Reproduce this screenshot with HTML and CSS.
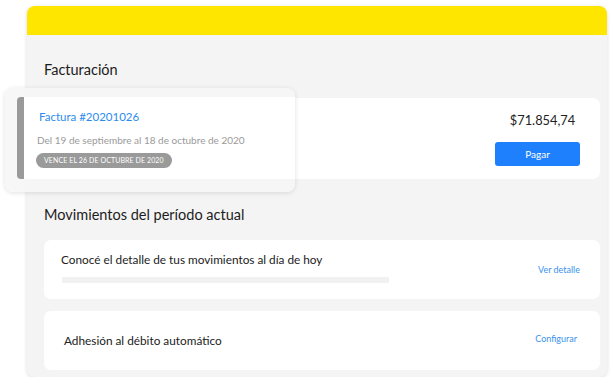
FILE: index.html
```html
<!DOCTYPE html>
<html lang="es">
<head>
    <meta charset="UTF-8">
    <meta name="viewport" content="width=device-width, initial-scale=1.0">
    <title>Facturación</title>
    <link rel="stylesheet" href="styles.css">
</head>
<body>
    <div class="panel">
        <div class="panel-head"></div>
        <div class="panel-body">
            <h2 class="section-title first">Facturación</h2>
            <div class="card bill">
                <div class="bill-spacer"></div>
                <div class="bill-pay">
                    <div class="amount">$71.854,74</div>
                    <button class="pay-btn">Pagar</button>
                </div>
                <!-- highlighted invoice, floating over the card -->
                <div class="bill-float">
                    <div class="bill-float-inner">
                        <div class="bill-number">Factura #20201026</div>
                        <div class="bill-period">Del 19 de septiembre al 18 de octubre de 2020</div>
                        <span class="badge">Vence el 26 de octubre de 2020</span>
                    </div>
                </div>
            </div>

            <h2 class="section-title">Movimientos del período actual</h2>
            <div class="card row">
                <div class="row-main">
                    <div class="row-text">Conocé el detalle de tus movimientos al día de hoy</div>
                    <div class="placeholder"></div>
                </div>
                <a class="row-link">Ver detalle</a>
            </div>
            <div class="card row debit">
                <div class="row-text">Adhesión al débito automático</div>
                <a class="row-link">Configurar</a>
            </div>
        </div>
    </div>
</body>
</html>
```

FILE: styles.css
```css
* {
    box-sizing: border-box;
}
body {
    margin: 0;
    background: #fff;
    font-family: 'Lato', 'Noto Sans', sans-serif;
    color: #222;
}
.panel {
    width: 580px;
    height: 371px;
    margin: 6px 0 0 27px;
    background: #f4f4f4;
    border-radius: 8px;
    box-shadow: 0 1px 4px rgba(0, 0, 0, 0.14);
}
.panel-head {
    height: 29px;
    background: #ffe600;
    border-radius: 8px 8px 0 0;
}
.panel-body {
    padding: 0 7px 0 17px;
}
.section-title {
    margin: 26px 0 15px;
    font-size: 14.5px;
    font-weight: 400;
    line-height: 20px;
    color: #1c1c1c;
}
.section-title.first {
    margin: 25px 0 18px;
}
.card {
    background: #fff;
    border-radius: 7px;
}
.bill {
    position: relative;
    display: flex;
    justify-content: space-between;
    height: 81px;
    padding: 14px 20px 13px 0;
}
.bill-pay {
    width: 85px;
    display: flex;
    flex-direction: column;
    align-items: center;
    justify-content: space-between;
}
.amount {
    font-size: 12.8px;
    line-height: 17px;
    color: #222;
    margin-left: 10px;
}
.pay-btn {
    width: 85px;
    height: 24px;
    border: none;
    border-radius: 3px;
    background: #1f80fd;
    color: #fff;
    font-family: inherit;
    font-size: 10px;
}
.bill-float {
    position: absolute;
    left: -39px;
    top: -10px;
    width: 290px;
    height: 104px;
    padding: 9px 0 13px 12px;
    background: rgba(246, 246, 246, 0.9);
    border-radius: 8px;
    box-shadow: 0 1px 5px rgba(0, 0, 0, 0.12);
}
.bill-float-inner {
    height: 100%;
    background: #fff;
    border-left: 7px solid #9a9a9a;
    border-radius: 4px 0 0 4px;
    padding: 12px 0 0 13px;
}
.bill-number {
    margin-left: 2px;
    font-size: 11.5px;
    line-height: 15px;
    color: #2b8ced;
}
.bill-period {
    margin-top: 9px;
    font-size: 10px;
    line-height: 14px;
    color: #9a9a9a;
}
.badge {
    display: inline-block;
    margin-top: 6px;
    margin-left: -1px;
    padding: 0 8px;
    height: 15px;
    line-height: 15px;
    border-radius: 8px;
    background: #9a9a9a;
    color: #fff;
    font-size: 7px;
    text-transform: uppercase;
    letter-spacing: 0.1px;
}
.row {
    display: flex;
    align-items: center;
    justify-content: space-between;
    height: 59px;
    padding: 0 20px 0 17px;
}
.row-main {
    align-self: flex-start;
    padding-top: 13px;
}
.row-text {
    font-size: 11.8px;
    line-height: 14px;
    color: #222;
}
.placeholder {
    width: 327px;
    height: 6px;
    margin: 10px 0 0 1px;
    background: #f1f1f1;
}
.row-link {
    font-size: 9px;
    color: #3a93ee;
}
.debit {
    margin-top: 12px;
    padding: 0 23px 0 20px;
}
.debit .row-text {
    margin-top: 1px;
}
.debit .row-link {
    margin-bottom: 5px;
}
```
